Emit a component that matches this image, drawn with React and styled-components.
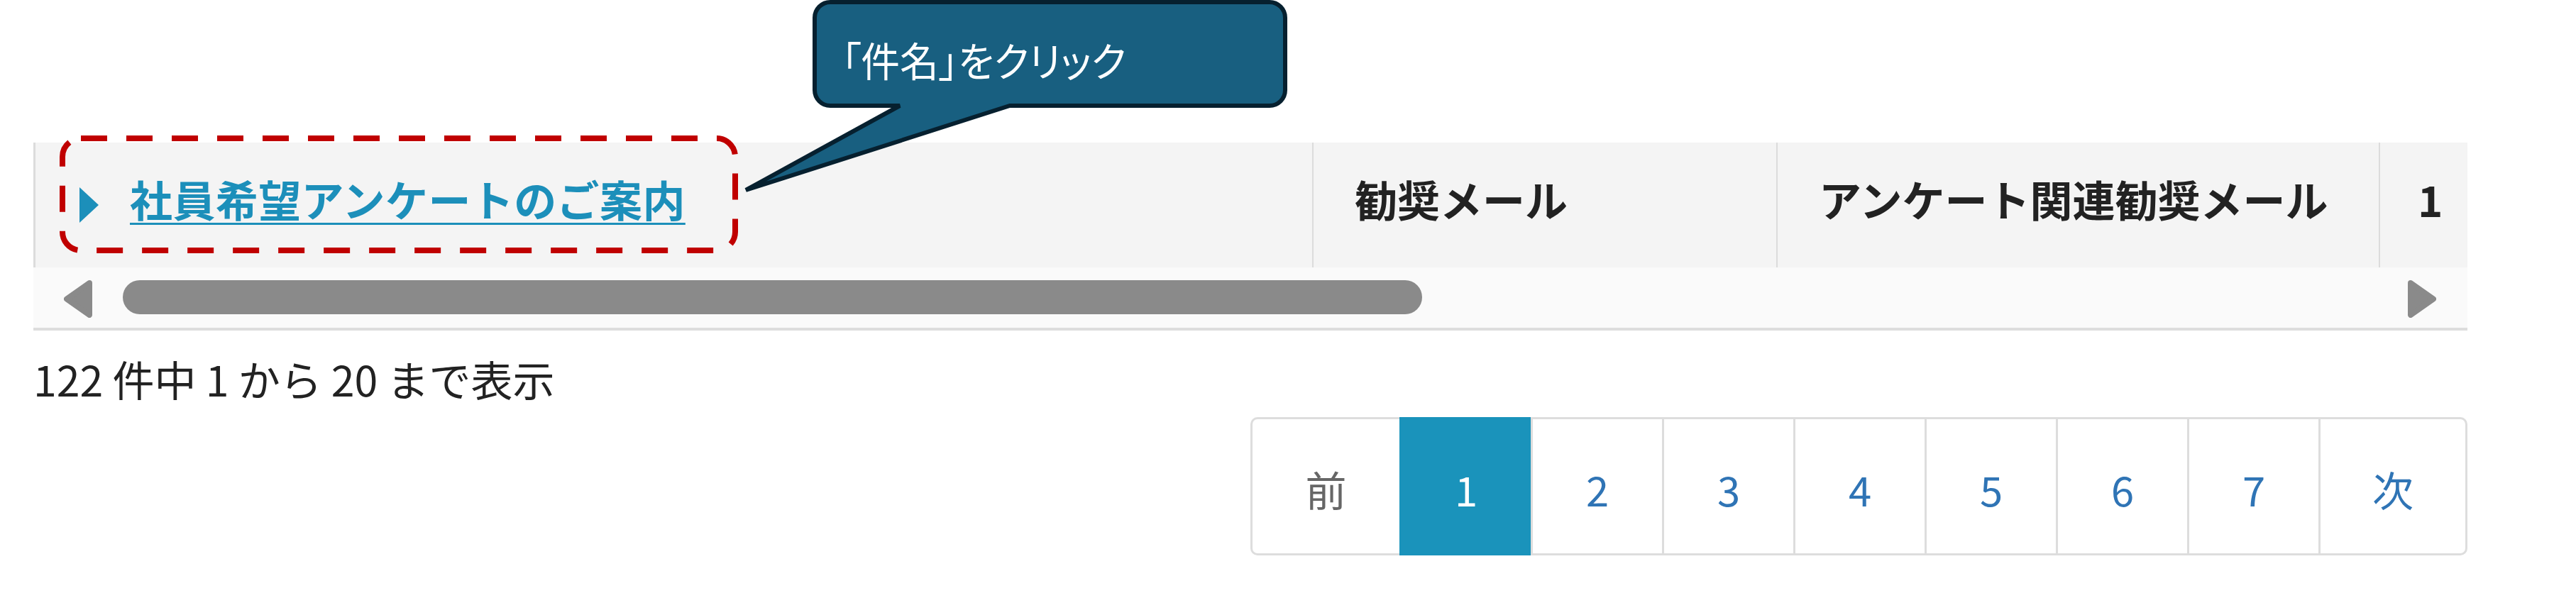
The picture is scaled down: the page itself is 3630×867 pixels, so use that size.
import React from "react";
import styled, { createGlobalStyle } from "styled-components";

const Global = createGlobalStyle`
  html, body { margin: 0; padding: 0; background: #ffffff; }
  body { font-family: "Noto Sans CJK JP", "Noto Sans", sans-serif; }
`;

const Page = styled.div`
  position: relative;
  width: 3477px;
  height: 867px;
  padding: 201px 0 0 47px;
  box-sizing: border-box;
  overflow: hidden;
`;

const TableWrap = styled.div`
  display: flex;
  flex-direction: column;
  width: 3430px;
`;

const Row = styled.div`
  display: flex;
  height: 176px;
  background: #f4f4f4;
`;

const Cell = styled.div`
  display: flex;
  align-items: center;
  box-sizing: border-box;
  width: ${(p) => p.$w}px;
  padding: 0 0 18px ${(p) => p.$pl}px;
  border-left: ${(p) => (p.$first ? 3 : 2)}px solid #dcdcdc;
  font-size: 60px;
  line-height: 60px;
  font-weight: 700;
  color: #222222;
  white-space: nowrap;
  overflow: hidden;
`;

const Caret = styled.span`
  width: 0;
  height: 0;
  border-left: 27px solid #1c8fba;
  border-top: 25px solid transparent;
  border-bottom: 25px solid transparent;
  margin: 18px 44px 0 0;
`;

const Link = styled.a`
  color: #1c8fba;
  font-weight: 700;
  letter-spacing: 0.4px;
  text-decoration: underline;
  text-decoration-thickness: 3px;
  text-underline-offset: 8px;
  cursor: pointer;
`;

const ScrollBar = styled.div`
  display: flex;
  align-items: flex-start;
  box-sizing: border-box;
  height: 89px;
  padding: 18px 44px 0 43px;
  background: #fafafa;
  border-bottom: 4px solid #dddddd;
`;

const Track = styled.div`
  flex: 1;
  margin-left: 43px;
  display: flex;
`;

const Thumb = styled.div`
  width: 1831px;
  height: 48px;
  border-radius: 24px;
  background: #8a8a8a;
`;

const Arrow = ({ dir }) => (
  <svg width="40" height="53" viewBox="0 0 40 53">
    <path
      d={dir === "left" ? "M36 4 L4 26.5 L36 49 Z" : "M4 4 L36 26.5 L4 49 Z"}
      fill="#8a8a8a"
      stroke="#8a8a8a"
      strokeWidth="8"
      strokeLinejoin="round"
    />
  </svg>
);

const Info = styled.div`
  margin-top: 38px;
  font-size: 59px;
  line-height: 60px;
  color: #222222;
  white-space: nowrap;
`;

const PagerRow = styled.div`
  display: flex;
  justify-content: flex-end;
  margin-top: 24px;
`;

const Pager = styled.div`
  display: flex;
  height: 195px;
`;

const PageItem = styled.div`
  display: flex;
  align-items: center;
  justify-content: center;
  box-sizing: border-box;
  width: ${(p) => p.$w}px;
  height: 100%;
  padding-top: 6px;
  border: 3px solid ${(p) => (p.$active ? "#1a93bb" : "#dddddd")};
  border-right: ${(p) => (p.$last ? "3px solid #dddddd" : "none")};
  border-radius: ${(p) => (p.$first ? "10px 0 0 10px" : p.$last ? "0 10px 10px 0" : "0")};
  background: ${(p) => (p.$active ? "#1a93bb" : "#ffffff")};
  color: ${(p) => (p.$active ? "#ffffff" : p.$muted ? "#666666" : "#2f74b5")};
  font-size: 58px;
  line-height: 58px;
`;

const Callout = styled.div`
  position: absolute;
  left: 1040px;
  top: 0;
  width: 780px;
  height: 275px;
`;

const CalloutShape = styled.svg`
  position: absolute;
  left: 0;
  top: 0;
`;

const CalloutText = styled.div`
  position: absolute;
  left: 146px;
  top: 55px;
  font-size: 57px;
  line-height: 57px;
  color: #ffffff;
  white-space: nowrap;
  font-feature-settings: "palt";
  transform: scaleX(0.96);
  transform-origin: left center;
`;

const Highlight = styled.svg`
  position: absolute;
  left: 84px;
  top: 191px;
`;

const pages = ["1", "2", "3", "4", "5", "6", "7"];

export default function App() {
  return (
    <>
      <Global />
      <Page>
        <TableWrap>
          <Row>
            <Cell $w={1802} $pl={62} $first>
              <Caret />
              <Link>社員希望アンケートのご案内</Link>
            </Cell>
            <Cell $w={654} $pl={58}>勧奨メール</Cell>
            <Cell $w={849} $pl={58}>アンケート関連勧奨メール</Cell>
            <Cell $w={125} $pl={53}>1</Cell>
          </Row>
          <ScrollBar>
            <Arrow dir="left" />
            <Track>
              <Thumb />
            </Track>
            <Arrow dir="right" />
          </ScrollBar>
        </TableWrap>
        <Info>122 件中 1 から 20 まで表示</Info>
        <PagerRow>
          <Pager>
            <PageItem $w={210} $first $muted>前</PageItem>
            {pages.map((n) => (
              <PageItem key={n} $w={185} $active={n === "1"}>
                {n}
              </PageItem>
            ))}
            <PageItem $w={210} $last>次</PageItem>
          </Pager>
        </PagerRow>

        <Highlight width="956" height="166" viewBox="0 0 956 166">
          <rect
            x="4"
            y="4"
            width="948"
            height="158"
            rx="26"
            fill="none"
            stroke="#c00000"
            strokeWidth="8"
            strokeDasharray="37 27"
          />
        </Highlight>

        <Callout>
          <CalloutShape width="780" height="275" viewBox="0 0 780 275">
            <path
              d="M130 3 H749 A22 22 0 0 1 771 25 V127 A22 22 0 0 1 749 149 H383 L11 268 L228 149 H130 A22 22 0 0 1 108 127 V25 A22 22 0 0 1 130 3 Z"
              fill="#185f80"
              stroke="#06202f"
              strokeWidth="6"
              strokeLinejoin="miter"
            />
          </CalloutShape>
          <CalloutText>「件名」をクリック</CalloutText>
        </Callout>
      </Page>
    </>
  );
}
